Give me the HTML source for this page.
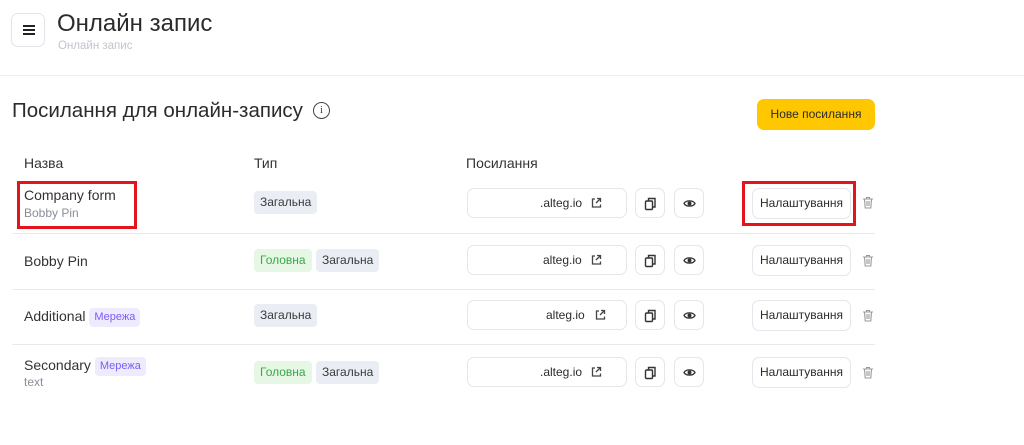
<!DOCTYPE html>
<html><head><meta charset="utf-8"><style>
*{box-sizing:border-box;margin:0;padding:0}
body{width:1024px;height:445px;background:#fff;font-family:"Liberation Sans","DejaVu Sans",sans-serif;color:#2b2b2b;position:relative;overflow:hidden}
.abs{position:absolute}
.menu{left:11px;top:13px;width:34px;height:34px;border:1px solid #e2e4ea;border-radius:7px}
.menu i{position:absolute;left:11px;width:12px;height:2px;background:#222}
h1{position:absolute;left:57px;top:10px;font-size:24px;font-weight:normal;color:#2b2b2b}
.sub{left:58px;top:40px;font-size:11.5px;color:#c0c4cc}
.hline{left:0;top:75px;width:1024px;height:1px;background:#eceef2}
.sec{left:12px;top:99px;font-size:20.5px;color:#2b2b2b}
.info{left:313px;top:102px;width:17px;height:17px;border:1.5px solid #444;border-radius:50%;font-size:11px;text-align:center;line-height:14px;font-family:"Liberation Serif",serif;color:#444}
.yel{left:757px;top:99px;width:118px;height:31px;background:#ffc700;border-radius:7px;font-size:12px;text-align:center;line-height:31px;color:#2b2b2b}
.th{top:155px;font-size:14px;color:#333}
.rl{left:12px;width:863px;height:1px;background:#e8eaf0}
.name{left:24px;font-size:14px;color:#333}
.nsub{left:24px;font-size:12px;color:#8a8e99}
.tag{height:23px;line-height:23px;padding:0 6px;border-radius:4px;font-size:12px;background:#eaedf3;color:#3a3a3a}
.tag.g{background:#e6f7e6;color:#3aa84a}
.tag.p{background:#efebff;color:#7b5cf5;font-size:11px;height:19px;line-height:19px;padding:0 5px}
.inp{left:467px;width:160px;height:30px;border:1px solid #e4e6eb;border-radius:7px;font-size:12px;color:#2b2b2b}
.sq{width:30px;height:30px;border:1px solid #e4e6eb;border-radius:7px}
.set{left:752px;width:99px;height:31px;border:1px solid #e4e6eb;border-radius:7px;font-size:12px;text-align:center;line-height:29px;color:#2b2b2b}
.red{border:3px solid #e3141b}
</style></head><body>
<div class="abs menu"><i style="top:11px"></i><i style="top:15px"></i><i style="top:19px"></i></div>
<h1>Онлайн запис</h1>
<div class="abs sub">Онлайн запис</div>
<div class="abs hline"></div>
<div class="abs sec">Посилання для онлайн-запису</div>
<div class="abs info">i</div>
<div class="abs yel">Нове посилання</div>
<div class="abs th" style="left:24px">Назва</div>
<div class="abs th" style="left:254px">Тип</div>
<div class="abs th" style="left:466px">Посилання</div>

<div class="abs rl" style="top:233px"></div>
<div class="abs rl" style="top:289px"></div>
<div class="abs rl" style="top:344px"></div>

<div class="abs red" style="left:17px;top:181px;width:120px;height:48px"></div>
<div class="abs name" style="top:187px">Company form</div>
<div class="abs nsub" style="top:206px">Bobby Pin</div>
<div class="abs name" style="top:253px">Bobby Pin</div>
<div class="abs name" style="top:308px">Additional <span class="tag p" style="display:inline-block;vertical-align:1px">Мережа</span></div>
<div class="abs name" style="top:357px">Secondary <span class="tag p" style="display:inline-block;vertical-align:1px">Мережа</span></div>
<div class="abs nsub" style="top:375px">text</div>

<div class="abs tag" style="left:254px;top:191px">Загальна</div>
<div class="abs tag g" style="left:254px;top:249px">Головна</div><div class="abs tag" style="left:316px;top:249px">Загальна</div>
<div class="abs tag" style="left:254px;top:304px">Загальна</div>
<div class="abs tag g" style="left:254px;top:361px">Головна</div><div class="abs tag" style="left:316px;top:361px">Загальна</div>

<svg width="0" height="0" style="position:absolute"><defs>
<g id="ext"><path d="M5 2H2.5v8h8V7.5M7 1.5h3.5V5M10.5 1.5L6 6" fill="none" stroke="#444" stroke-width="1.3"/></g>
<g id="cp"><rect x="1.5" y="4" width="7" height="8.5" rx="1" fill="none" stroke="#333" stroke-width="1.4"/><path d="M4.5 4V1.5h6.5v8.5H8.5" fill="none" stroke="#333" stroke-width="1.4"/></g>
<g id="eye"><path d="M1 6.5C3 3 10 3 12 6.5 10 10 3 10 1 6.5Z" fill="none" stroke="#333" stroke-width="1.3"/><circle cx="6.5" cy="6.5" r="2" fill="#333"/></g>
<g id="tr"><path d="M1 3h10M4.5 3V1.5h3V3M2.5 3l.7 9h5.6l.7-9M5 5v5M7 5v5" fill="none" stroke="#999" stroke-width="1.1"/></g>
</defs></svg>

<div class="abs red" style="left:742px;top:181px;width:114px;height:45px"></div>

<div class="abs inp" style="top:188px"><span class="abs" style="left:72px;top:7px">.alteg.io</span><svg class="abs" style="left:122px;top:8px" width="12" height="12"><use href="#ext"/></svg></div>
<div class="abs inp" style="top:245px"><span class="abs" style="left:75px;top:7px">alteg.io</span><svg class="abs" style="left:122px;top:8px" width="12" height="12"><use href="#ext"/></svg></div>
<div class="abs inp" style="top:300px"><span class="abs" style="left:78px;top:7px">alteg.io</span><svg class="abs" style="left:126px;top:8px" width="12" height="12"><use href="#ext"/></svg></div>
<div class="abs inp" style="top:357px"><span class="abs" style="left:72px;top:7px">.alteg.io</span><svg class="abs" style="left:122px;top:8px" width="12" height="12"><use href="#ext"/></svg></div>

<div class="abs sq" style="left:635px;top:188px"><svg class="abs" style="left:8px;top:8px" width="14" height="14"><use href="#cp"/></svg></div>
<div class="abs sq" style="left:674px;top:188px"><svg class="abs" style="left:8px;top:8px" width="14" height="14"><use href="#eye"/></svg></div>
<div class="abs sq" style="left:635px;top:245px"><svg class="abs" style="left:8px;top:8px" width="14" height="14"><use href="#cp"/></svg></div>
<div class="abs sq" style="left:674px;top:245px"><svg class="abs" style="left:8px;top:8px" width="14" height="14"><use href="#eye"/></svg></div>
<div class="abs sq" style="left:635px;top:300px"><svg class="abs" style="left:8px;top:8px" width="14" height="14"><use href="#cp"/></svg></div>
<div class="abs sq" style="left:674px;top:300px"><svg class="abs" style="left:8px;top:8px" width="14" height="14"><use href="#eye"/></svg></div>
<div class="abs sq" style="left:635px;top:357px"><svg class="abs" style="left:8px;top:8px" width="14" height="14"><use href="#cp"/></svg></div>
<div class="abs sq" style="left:674px;top:357px"><svg class="abs" style="left:8px;top:8px" width="14" height="14"><use href="#eye"/></svg></div>

<div class="abs set" style="top:188px">Налаштування</div>
<div class="abs set" style="top:245px">Налаштування</div>
<div class="abs set" style="top:300px">Налаштування</div>
<div class="abs set" style="top:357px">Налаштування</div>

<svg class="abs" style="left:862px;top:196px" width="12" height="14"><use href="#tr"/></svg>
<svg class="abs" style="left:862px;top:254px" width="12" height="14"><use href="#tr"/></svg>
<svg class="abs" style="left:862px;top:309px" width="12" height="14"><use href="#tr"/></svg>
<svg class="abs" style="left:862px;top:366px" width="12" height="14"><use href="#tr"/></svg>
</body></html>
